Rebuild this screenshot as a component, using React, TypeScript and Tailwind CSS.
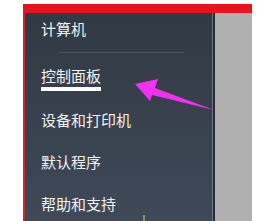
export default function App() {
  const items = ["设备和打印机", "默认程序", "帮助和支持"];
  return (
    <div
      className="relative w-[257px] h-[221px] overflow-hidden bg-white pl-[23px] pr-[5px] pt-[4px]"
      style={{ fontFamily: '"Noto Sans CJK SC", "Noto Sans", sans-serif' }}
    >
      <div className="flex h-full flex-col">
        {/* red top bar */}
        <div className="h-[9px] bg-[#e8131c]" />
        <div className="flex flex-1">
          <div className="w-[2px] bg-[#c9272f]" />
          {/* start menu right column */}
          <div className="w-[187px] bg-linear-to-b from-[#313943] to-[#3f4958] pl-[16px] pt-[8px] text-[15px] leading-[15px] text-[#f2f2f2]">
            <p>计算机</p>
            <div className="mt-[16px] ml-[17px] h-px w-[126px] bg-[#4a535f]" />
            <p className="mt-[15px]">控制面板</p>
            <div className="mt-[4px] h-[4px] w-[60px] bg-white" />
            <p className="mt-[21px]">{items[0]}</p>
            <p className="mt-[27px]">{items[1]}</p>
            <p className="mt-[27px]">{items[2]}</p>
          </div>
          <div className="w-px bg-[#6a7380]" />
          <div className="w-[2px] bg-[#272d35]" />
          <div className="flex-1 bg-[#b0b0b0]" />
        </div>
      </div>

      {/* pink arrow overlay */}
      <svg className="absolute left-0 top-0" width="257" height="221" viewBox="0 0 257 221">
        <polygon
          points="135,84 158,79 155,88 214,110 152,95 150,101"
          fill="#f231ee"
        />
      </svg>
      <div className="absolute left-[143px] top-[215px] h-[6px] w-[2px] bg-[#8fbf5a] opacity-70" />
    </div>
  );
}
